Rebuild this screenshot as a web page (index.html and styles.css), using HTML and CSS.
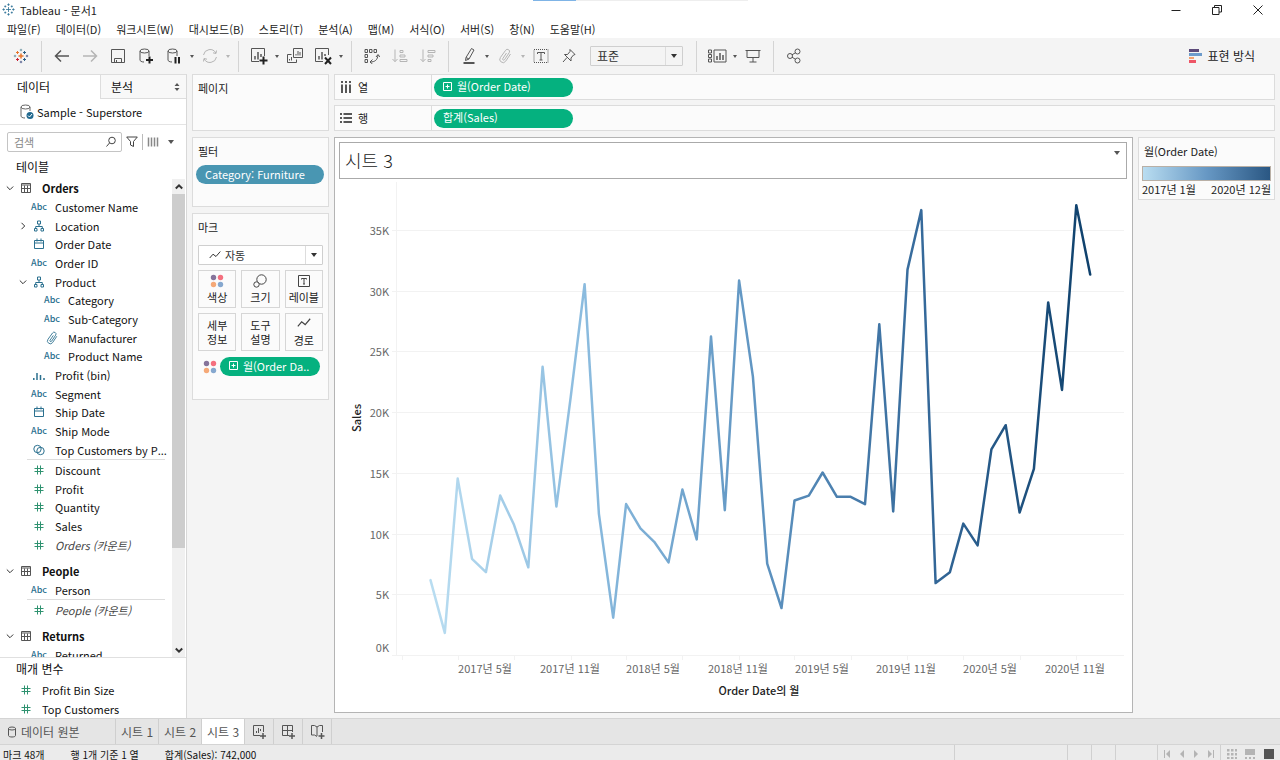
FILE: index.html
```html
<!DOCTYPE html>
<html lang="ko">
<head>
    <meta charset="UTF-8">
    <meta name="viewport" content="width=device-width, initial-scale=1.0">
    <title>Tableau - 문서1</title>
    <link rel="stylesheet" href="styles.css">
</head>
<body>

    <!-- 아이콘 -->
    <svg class="sprite" aria-hidden="true">
        <symbol id="i-logo" viewBox="0 0 16 16"><path d="M8 5v6M5 8h6M8 0.500v3M6.500 2h3M8 12.500v3M6.500 14h3M2 6.500v3M.5 8h3M14 6.500v3M12.500 8h3M4 3v2.500M2.800 4.200h2.500M12 3v2.500M10.800 4.200h2.500M4 10.500v2.500M2.800 11.800h2.500M12 10.500v2.500M10.800 11.800h2.500"/></symbol>
        <symbol id="i-back" viewBox="0 0 16 16"><path d="M15 8H1.500M7 2.500 1.500 8 7 13.500" stroke-width="1.500"/></symbol>
        <symbol id="i-fwd" viewBox="0 0 16 16"><path d="M1 8h13.500M9 2.500 14.500 8 9 13.500" stroke-width="1.500"/></symbol>
        <symbol id="i-save" viewBox="0 0 16 16"><path d="M1.500 1.500h13v13h-13zM4.500 14.500v-4h7v4M6.500 12v2.500"/></symbol>
        <symbol id="i-dbadd" viewBox="0 0 16 16"><ellipse cx="6.500" cy="3" rx="4.500" ry="2"/><path d="M2 3v9c0 1 1.500 2 4 2M11 3v5"/><path d="M11.500 8.500v7M8 12h7" stroke="#222" stroke-width="2"/></symbol>
        <symbol id="i-dbpause" viewBox="0 0 16 16"><ellipse cx="6.500" cy="3" rx="4.500" ry="2"/><path d="M2 3v9c0 1 1.500 2 4 2M11 3v5"/><path d="M9.500 9v6.500M13 9v6.500" stroke="#222" stroke-width="2"/></symbol>
        <symbol id="i-refresh" viewBox="0 0 16 16"><path d="M1.500 7a6.600 6.600 0 0 1 12.300-2M14.500 9a6.600 6.600 0 0 1-12.300 2M14.500 2.500 14 5.500l-3-.7M1.500 13.500l.5-3 3 .7"/></symbol>
        <symbol id="i-newsheet" viewBox="0 0 18 18"><path d="M9 14.500H1.500v-13h13V9"/><path d="M5 9v3.500M8 5v7.500M11 7v3" stroke-width="1.500"/><path d="M13.500 9.500v8M9.500 13.500h8" stroke="#222" stroke-width="2"/></symbol>
        <symbol id="i-dup" viewBox="0 0 16 16"><path d="M6.500 .5h9v9h-9zM4.500 6.500h-4v8h9v-3M9 7.500V6M11 7.500V3M13 7.500V4M2.500 12.500V11M4.500 12.500V9"/></symbol>
        <symbol id="i-clear" viewBox="0 0 18 18"><path d="M9 14.500H1.500v-13h13V8"/><path d="M5 9v3.500M8 5v7.500M11 7v2" stroke-width="1.500"/><path d="m11 10.500 6 6.500M17 10.500 11 17" stroke="#222" stroke-width="2"/></symbol>
        <symbol id="i-swap" viewBox="0 0 16 16"><path d="M1 1.500h2.500v3H1zM5.500 1.500H8v3H5.500zM10 1.500h2.500v3H10zM1 6.500h2.500v3H1zM1 11.500h2.500v3H1zM6 14c5 0 7.500-2 8-7M8.500 11.500 6 14l2.500 2M12 9l2-2.500L16 9"/></symbol>
        <symbol id="i-asc" viewBox="0 0 16 16"><path d="M3 1.500v12M.5 11 3 13.700 5.500 11M8 2.500h3v2H8zM8 7h5v2H8zM8 11.500h7v2H8z"/></symbol>
        <symbol id="i-desc" viewBox="0 0 16 16"><path d="M3 1.500v12M.5 11 3 13.700 5.500 11M8 2.500h7v2H8zM8 7h5v2H8zM8 11.500h3v2H8z"/></symbol>
        <symbol id="i-pen" viewBox="0 0 16 16"><path d="m5 9.500 5.500-9 2.500 1.500-5 9-3.500 1.500zM5 9.500l3 1.500"/><path d="M2.500 15h11" stroke-width="2"/></symbol>
        <symbol id="i-clip" viewBox="0 0 16 16"><path d="m9.500 5-3.700 5.500a1 1 0 0 0 1.700 1.200l4.700-7a2.100 2.100 0 0 0-3.600-2.400L3.400 9.500a3.200 3.200 0 0 0 5.300 3.700L13.500 6"/></symbol>
        <symbol id="i-text" viewBox="0 0 16 16"><path d="M1 1.500h14v13H1z" stroke-dasharray="1 1"/><path d="M4.500 6V4.500h7V6M8 4.500V12M6.500 12h3"/></symbol>
        <symbol id="i-pin" viewBox="0 0 16 16"><path d="m9 1.500 5 5-1.500.5-2.500 3v3L3.500 6.500h3l2.500-3zM6 9.500 2 14"/></symbol>
        <symbol id="i-cards" viewBox="0 0 20 16"><path d="M1.500 2h3v3h-3zM1.500 6.500h3v3h-3zM1.500 11h3v3h-3zM7 2h12v12H7z"/><path d="M10 8v4M13 5v7M16 7v5" stroke-width="1.500"/></symbol>
        <symbol id="i-present" viewBox="0 0 16 16"><path d="M.5 2.500h15M2 2.500v7h12v-7M8 9.500V14M4.500 14h7"/></symbol>
        <symbol id="i-share" viewBox="0 0 16 16"><circle cx="4" cy="8" r="2.500"/><circle cx="11.500" cy="3.500" r="2.500"/><circle cx="11.500" cy="12.500" r="2.500"/><path d="m6 6.800 3.400-2M6 9.200l3.400 2"/></symbol>
        <symbol id="i-table" viewBox="0 0 12 12"><path d="M1.500 1.500h9v9h-9zM1.500 3h9M4.500 3.500V10M7.500 3.500V10M1.500 6.500h9"/></symbol>
        <symbol id="i-hier" viewBox="0 0 12 12"><path d="M4.500 1h3v3h-3zM1.500 8.500h2.500V11H1.500zM8 8.500h2.500V11H8zM6 4v2.500M2.700 8.500v-2h6.600v2"/></symbol>
        <symbol id="i-date" viewBox="0 0 12 12"><path d="M1.500 2.500h9v8h-9zM1.500 5h9M4 .5v3M8 .5v3"/></symbol>
        <symbol id="i-bin" viewBox="0 0 12 12"><path d="M.8 9v2M4 4v7M7.500 6v5M11 9v2" stroke-width="1.500"/></symbol>
        <symbol id="i-set" viewBox="0 0 12 12"><circle cx="4.500" cy="5" r="3.700"/><circle cx="7.500" cy="7" r="3.700"/></symbol>
        <symbol id="i-num" viewBox="0 0 12 12"><path d="M4.500 1.500v9M7.500 1.500v9M1.500 4.500h9M1.500 7.500h9"/></symbol>
        <symbol id="i-down" viewBox="0 0 8 8"><path d="M.8 2.500 4 5.700l3.200-3.200"/></symbol>
        <symbol id="i-right" viewBox="0 0 8 8"><path d="M2.500.8 5.700 4 2.500 7.200"/></symbol>
        <symbol id="i-up" viewBox="0 0 8 8"><path d="M.8 5.500 4 2.300l3.200 3.200"/></symbol>
        <symbol id="i-line" viewBox="0 0 12 10"><path d="M.7 8 4 4.200l3 2.300L11.300 1.500"/></symbol>
        <symbol id="i-plusbox" viewBox="0 0 9 9"><path d="M.5.5h8v8h-8zM4.500 2.500v4M2.500 4.500h4"/></symbol>
        <symbol id="i-dots" viewBox="0 0 14 14"><circle cx="3.500" cy="3.500" r="2.700" fill="#86749b"/><circle cx="10.500" cy="3.500" r="2.700" fill="#f4707f"/><circle cx="3.500" cy="10.500" r="2.700" fill="#f5a978"/><circle cx="10.500" cy="10.500" r="2.700" fill="#86a8cf"/></symbol>
    </svg>

    <header class="titlebar">
        <svg class="icon app-icon"><use href="#i-logo"/></svg>
        <h1>Tableau - 문서1</h1>
        <div class="load-strip"></div>
        <div class="window-buttons">
            <button aria-label="최소화"><svg class="icon" viewBox="0 0 12 12"><path d="M1.500 6.500h9"/></svg></button>
            <button aria-label="이전 크기로"><svg class="icon" viewBox="0 0 12 12"><path d="M1.500 3.500h6.500V10.500H1.500zM3.500 3.500v-2h7v6.500h-2.500"/></svg></button>
            <button aria-label="닫기"><svg class="icon" viewBox="0 0 12 12"><path d="m1.500 1.500 9 9M10.500 1.500l-9 9"/></svg></button>
        </div>
    </header>

    <nav class="menubar">
        <button>파일(F)</button>
        <button>데이터(D)</button>
        <button>워크시트(W)</button>
        <button>대시보드(B)</button>
        <button>스토리(T)</button>
        <button>분석(A)</button>
        <button>맵(M)</button>
        <button>서식(O)</button>
        <button>서버(S)</button>
        <button>창(N)</button>
        <button>도움말(H)</button>
    </nav>

    <div class="toolbar">
        <button class="tool" aria-label="시작 페이지">
            <svg class="icon" viewBox="0 0 16 16">
                <path d="M8 5.500v5M5.500 8h5" stroke="#e8762c" stroke-width="1.500"/>
                <path d="M4.500 3v3M3 4.500h3" stroke="#e8762c"/><path d="M11.500 3v3M10 4.500h3" stroke="#2c5f86"/>
                <path d="M4.500 10v3M3 11.500h3" stroke="#c72035"/><path d="M11.500 10v3M10 11.500h3" stroke="#2c5f86"/>
                <path d="M8 .8v2.400M6.800 2h2.400M2 6.800v2.400M.8 8h2.400" stroke="#7199a6"/>
                <path d="M8 12.800v2.400M6.800 14h2.400M14 6.800v2.400M12.800 8h2.400" stroke="#5b6591"/>
            </svg>
        </button>
        <span class="sep"></span>
        <button class="tool" aria-label="실행 취소"><svg class="icon"><use href="#i-back"/></svg></button>
        <button class="tool off" aria-label="다시 실행"><svg class="icon"><use href="#i-fwd"/></svg></button>
        <button class="tool" aria-label="저장"><svg class="icon"><use href="#i-save"/></svg></button>
        <button class="tool" aria-label="새 데이터 원본"><svg class="icon"><use href="#i-dbadd"/></svg></button>
        <button class="tool" aria-label="자동 업데이트 일시 중지"><svg class="icon"><use href="#i-dbpause"/></svg></button>
        <button class="more" aria-label="업데이트 옵션"></button>
        <button class="tool off" aria-label="업데이트 실행"><svg class="icon"><use href="#i-refresh"/></svg></button>
        <button class="more off" aria-label="실행 옵션"></button>
        <span class="sep"></span>
        <button class="tool" aria-label="새 워크시트"><svg class="icon wide"><use href="#i-newsheet"/></svg></button>
        <button class="more" aria-label="새로 만들기"></button>
        <button class="tool" aria-label="복제"><svg class="icon"><use href="#i-dup"/></svg></button>
        <button class="tool" aria-label="시트 지우기"><svg class="icon wide"><use href="#i-clear"/></svg></button>
        <button class="more" aria-label="지우기 옵션"></button>
        <span class="sep"></span>
        <button class="tool" aria-label="행과 열 바꾸기"><svg class="icon"><use href="#i-swap"/></svg></button>
        <button class="tool off" aria-label="오름차순 정렬"><svg class="icon"><use href="#i-asc"/></svg></button>
        <button class="tool off" aria-label="내림차순 정렬"><svg class="icon"><use href="#i-desc"/></svg></button>
        <span class="sep"></span>
        <button class="tool" aria-label="하이라이트"><svg class="icon"><use href="#i-pen"/></svg></button>
        <button class="more" aria-label="하이라이트 옵션"></button>
        <button class="tool off" aria-label="멤버 그룹화"><svg class="icon"><use href="#i-clip"/></svg></button>
        <button class="more off" aria-label="그룹 옵션"></button>
        <button class="tool" aria-label="마크 레이블 표시"><svg class="icon"><use href="#i-text"/></svg></button>
        <button class="tool" aria-label="축 고정"><svg class="icon"><use href="#i-pin"/></svg></button>
        <span class="select fit">
            <select aria-label="맞춤"><option>표준</option><option>전체 보기</option></select>
        </span>
        <span class="sep"></span>
        <button class="tool" aria-label="카드 표시"><svg class="icon cards-icon"><use href="#i-cards"/></svg></button>
        <button class="more" aria-label="카드 옵션"></button>
        <button class="tool" aria-label="프레젠테이션 모드"><svg class="icon"><use href="#i-present"/></svg></button>
        <span class="sep"></span>
        <button class="tool" aria-label="공유"><svg class="icon"><use href="#i-share"/></svg></button>
        <button class="show-me">
            <svg width="14" height="14" viewBox="0 0 14 14"><path d="M0 0h10v3H0z" fill="#5d4a7a"/><path d="M0 4h13v3H0z" fill="#6d9bcb"/><path d="M0 8h5v2H0z" fill="#f3a170"/><path d="M0 11h7v3H0z" fill="#ee5566"/></svg>
            표현 방식
        </button>
    </div>

    <main class="workspace">
        <aside class="side">
            <div class="side-tabs">
                <button class="active">데이터</button>
                <button>분석
                    <svg width="6" height="8" viewBox="0 0 6 8"><path d="M3 0 5.500 3h-5zM3 8 5.500 5h-5z" fill="#555"/></svg>
                </button>
            </div>
            <div class="source">
                <svg class="icon" viewBox="0 0 16 16"><ellipse cx="6.500" cy="3" rx="4.500" ry="2"/><path d="M2 3v9c0 1 1.500 2 4 2M11 3v4"/><circle cx="11" cy="11.500" r="3.500" fill="#21698f" stroke="none"/><path d="m9 11.500 1.500 1.500L13 10" stroke="#fff"/></svg>
                Sample - Superstore
            </div>
            <div class="search-row">
                <label class="search">
                    <input type="text" placeholder="검색" aria-label="검색">
                    <svg class="icon small" viewBox="0 0 12 12"><circle cx="7" cy="4.500" r="3.300"/><path d="M4.500 7 1.500 10.500"/></svg>
                </label>
                <button aria-label="필터"><svg class="icon small" viewBox="0 0 12 12"><path d="M.7 1h10.600L7.500 5.500v5l-3-1.500V5.500z"/></svg></button>
                <span class="search-sep"></span>
                <button class="view-as" aria-label="보기"><svg class="icon small" viewBox="0 0 12 12"><path d="M1.500 1.500v9M4.500 1.500v9M7.500 1.500v9M10.500 1.500v9" stroke="#888" stroke-width="1.500"/></svg></button>
                <button class="more dark" aria-label="보기 옵션"></button>
            </div>
            <h2>테이블</h2>

            <div class="tree">
                <div class="tree-list">
                    <ul class="rows rows-15">
                        <li class="table-name"><button class="chev" aria-label="접기"><svg class="icon"><use href="#i-down"/></svg></button><span class="kind"><svg class="icon"><use href="#i-table"/></svg></span>Orders</li>
                        <li class="l1"><span class="kind abc">Abc</span>Customer Name</li>
                        <li class="l1"><button class="chev" aria-label="펼치기"><svg class="icon"><use href="#i-right"/></svg></button><span class="kind"><svg class="icon"><use href="#i-hier"/></svg></span>Location</li>
                        <li class="l1"><span class="kind"><svg class="icon"><use href="#i-date"/></svg></span>Order Date</li>
                        <li class="l1"><span class="kind abc">Abc</span>Order ID</li>
                        <li class="l1"><button class="chev" aria-label="접기"><svg class="icon"><use href="#i-down"/></svg></button><span class="kind"><svg class="icon"><use href="#i-hier"/></svg></span>Product</li>
                        <li class="l2"><span class="kind abc">Abc</span>Category</li>
                        <li class="l2"><span class="kind abc">Abc</span>Sub-Category</li>
                        <li class="l2"><span class="kind"><svg class="icon group-icon"><use href="#i-clip"/></svg></span>Manufacturer</li>
                        <li class="l2"><span class="kind abc">Abc</span>Product Name</li>
                        <li class="l1"><span class="kind"><svg class="icon"><use href="#i-bin"/></svg></span>Profit (bin)</li>
                        <li class="l1"><span class="kind abc">Abc</span>Segment</li>
                        <li class="l1"><span class="kind"><svg class="icon"><use href="#i-date"/></svg></span>Ship Date</li>
                        <li class="l1"><span class="kind abc">Abc</span>Ship Mode</li>
                        <li class="l1"><span class="kind"><svg class="icon"><use href="#i-set"/></svg></span>Top Customers by P...</li>
                    </ul>
                    <ul class="rows rows-5 measures">
                        <li class="l1"><span class="kind num"><svg class="icon"><use href="#i-num"/></svg></span>Discount</li>
                        <li class="l1"><span class="kind num"><svg class="icon"><use href="#i-num"/></svg></span>Profit</li>
                        <li class="l1"><span class="kind num"><svg class="icon"><use href="#i-num"/></svg></span>Quantity</li>
                        <li class="l1"><span class="kind num"><svg class="icon"><use href="#i-num"/></svg></span>Sales</li>
                        <li class="l1"><span class="kind num"><svg class="icon"><use href="#i-num"/></svg></span><em>Orders (카운트)</em></li>
                    </ul>
                    <ul class="rows next-table">
                        <li class="table-name"><button class="chev" aria-label="접기"><svg class="icon"><use href="#i-down"/></svg></button><span class="kind"><svg class="icon"><use href="#i-table"/></svg></span>People</li>
                        <li class="l1"><span class="kind abc">Abc</span>Person</li>
                    </ul>
                    <ul class="rows measures">
                        <li class="l1"><span class="kind num"><svg class="icon"><use href="#i-num"/></svg></span><em>People (카운트)</em></li>
                    </ul>
                    <ul class="rows next-table">
                        <li class="table-name"><button class="chev" aria-label="접기"><svg class="icon"><use href="#i-down"/></svg></button><span class="kind"><svg class="icon"><use href="#i-table"/></svg></span>Returns</li>
                        <li class="l1"><span class="kind abc">Abc</span>Returned</li>
                    </ul>
                </div>
                <div class="scrollbar">
                    <button aria-label="위로"><svg class="icon"><use href="#i-up"/></svg></button>
                    <div class="track"><div class="thumb"></div></div>
                    <button aria-label="아래로"><svg class="icon"><use href="#i-down"/></svg></button>
                </div>
            </div>

            <div class="params">
                <h2>매개 변수</h2>
                <ul class="rows">
                    <li><span class="kind num"><svg class="icon"><use href="#i-num"/></svg></span>Profit Bin Size</li>
                    <li><span class="kind num"><svg class="icon"><use href="#i-num"/></svg></span>Top Customers</li>
                </ul>
            </div>
        </aside>

        <section class="cards">
            <div class="card pages"><h3>페이지</h3></div>
            <div class="card filters">
                <h3>필터</h3>
                <button class="pill blue">Category: Furniture</button>
            </div>
            <div class="card marks">
                <h3>마크</h3>
                <span class="select mark-type">
                    <svg class="icon small"><use href="#i-line"/></svg>
                    <select aria-label="마크 유형"><option>자동</option><option>라인</option></select>
                </span>
                <div class="mark-buttons">
                    <button><svg width="14" height="14"><use href="#i-dots"/></svg>색상</button>
                    <button><svg class="icon" viewBox="0 0 14 14"><circle cx="8.500" cy="5.500" r="4.700"/><circle cx="3.500" cy="10.500" r="2.700" fill="#fbfbfb"/></svg>크기</button>
                    <button><svg class="icon" viewBox="0 0 14 14"><path d="M1.500 1.500h11v11h-11zM4.500 5.500v-1h5v1M7 4.500V10M6 10h2"/></svg>레이블</button>
                    <button>세부<br>정보</button>
                    <button>도구<br>설명</button>
                    <button><svg class="icon" viewBox="0 0 12 12"><use href="#i-line" width="12" height="10"/></svg>경로</button>
                </div>
                <div class="mark-row">
                    <svg width="14" height="14"><use href="#i-dots"/></svg>
                    <button class="pill green"><svg class="icon"><use href="#i-plusbox"/></svg>월(Order Da..</button>
                </div>
            </div>
        </section>

        <section class="canvas">
            <div class="shelf">
                <div class="shelf-name"><svg class="icon small" viewBox="0 0 12 12"><path d="M2 0v2M6 0v2M10 0v2M2 3.500V12M6 3.500V12M10 3.500V12" stroke-width="1.500"/></svg>열</div>
                <button class="pill green"><svg class="icon"><use href="#i-plusbox"/></svg>월(Order Date)</button>
            </div>
            <div class="shelf">
                <div class="shelf-name"><svg class="icon small" viewBox="0 0 12 12"><path d="M0 2h2M0 6h2M0 10h2M3.500 2H12M3.500 6H12M3.500 10H12" stroke-width="1.500"/></svg>행</div>
                <button class="pill green">합계(Sales)</button>
            </div>
            <div class="view-row">
                <div class="view">
                    <div class="sheet-title"><h2>시트 3</h2><button class="more dark" aria-label="제목 메뉴"></button></div>
                    <svg id="chart" class="chart" viewBox="0 0 797 533" preserveAspectRatio="xMidYMin meet">
                        <defs>
                            <linearGradient id="months" gradientUnits="userSpaceOnUse" x1="95" y1="0" x2="755" y2="0">
                                <stop offset="0" stop-color="#b9ddf1"/>
                                <stop offset="0.250" stop-color="#88b9dd"/>
                                <stop offset="0.500" stop-color="#5f94c1"/>
                                <stop offset="0.750" stop-color="#35699a"/>
                                <stop offset="1" stop-color="#0f416c"/>
                            </linearGradient>
                        </defs>
                        <g id="grid" class="grid"></g>
                        <g id="labels" class="labels"></g>
                        <text class="axis-title" text-anchor="middle" transform="translate(26 239) rotate(-90)">Sales</text>
                        <text class="axis-title" text-anchor="middle" x="424" y="516">Order Date의 월</text>
                        <path id="line" class="line"/>
                    </svg>
                </div>
                <div class="legend">
                    <h3>월(Order Date)</h3>
                    <div class="ramp"></div>
                    <div class="range"><span>2017년 1월</span><span>2020년 12월</span></div>
                </div>
            </div>
        </section>
    </main>

    <nav class="sheet-tabs">
        <button class="data-tab"><svg class="icon" viewBox="0 0 10 12"><ellipse cx="5" cy="2.500" rx="3.500" ry="1.500"/><path d="M1.500 2.500v7c0 2 7 2 7 0v-7"/></svg>데이터 원본</button>
        <button>시트 1</button>
        <button>시트 2</button>
        <button class="active">시트 3</button>
        <button class="add" aria-label="새 워크시트"><svg class="icon" viewBox="0 0 16 16"><path d="M9 11.500H2.500v-10h10V8M5.500 9V7M7.500 9V4M9.500 7V5"/><path d="M12 9v6M9 12h6" stroke-width="1.500"/></svg></button>
        <button class="add" aria-label="새 대시보드"><svg class="icon" viewBox="0 0 16 16"><path d="M9 11.500H2.500v-10h10V8M7.500 1.500v10M2.500 6.500h10"/><path d="M12 9v6M9 12h6" stroke-width="1.500"/></svg></button>
        <button class="add" aria-label="새 스토리"><svg class="icon" viewBox="0 0 16 16"><path d="M8 12.500 5.500 11H2.500V1.500h3L8 3l2.500-1.500h3V8M8 3v9"/><path d="M12.500 9v6M9.500 12h6" stroke-width="1.500"/></svg></button>
    </nav>

    <footer class="status">
        <span>마크 48개</span>
        <span>행 1개 기준 1 열</span>
        <span>합계(Sales): 742,000</span>
        <div class="status-cells"><i class="cell-l"></i><i class="cell-s"></i><i class="cell-s"></i><i class="cell-m"></i></div>
        <div class="pager">
            <button aria-label="처음"><svg width="6" height="8" viewBox="0 0 6 8"><path d="M0 0h1v8H0zM6 0v8L2 4z"/></svg></button>
            <button aria-label="이전"><svg width="6" height="8" viewBox="0 0 6 8"><path d="M5 0v8L1 4z"/></svg></button>
            <button aria-label="다음"><svg width="6" height="8" viewBox="0 0 6 8"><path d="M1 0v8l4-4z"/></svg></button>
            <button aria-label="마지막"><svg width="6" height="8" viewBox="0 0 6 8"><path d="M5 0h1v8H5zM0 0v8l4-4z"/></svg></button>
        </div>
        <div class="pager modes">
            <button aria-label="시트 정렬"><svg width="10" height="10" viewBox="0 0 10 10"><path d="M0 0h2.500v2.500H0zM4 0h2.500v2.500H4zM8 0h2v2.500H8zM0 4h2.500v2.500H0zM4 4h2.500v2.500H4zM8 4h2v2.500H8zM0 8h2.500v2H0zM4 8h2.500v2H4zM8 8h2v2H8z"/></svg></button>
            <button aria-label="필름 스트립"><svg width="10" height="10" viewBox="0 0 10 10"><path d="M0 0h10v6H0zM0 8h2v2H0zM4 8h2v2H4zM8 8h2v2H8z"/></svg></button>
            <button class="active" aria-label="탭"><svg width="10" height="10" viewBox="0 0 10 10"><path d="M0 0h10v10H0z"/></svg></button>
        </div>
    </footer>

    <script>
        // 월별 매출 (천 단위), 2017년 1월부터
        const sales = [
            6.25, 1.9, 14.6, 8, 6.9, 13.2, 10.8, 7.3, 23.8, 12.3, 21.3, 30.6,
            11.7, 3.15, 12.5, 10.5, 9.4, 7.7, 13.7, 9.6, 26.3, 12, 30.9, 23,
            7.6, 3.95, 12.8, 13.2, 15.1, 13.1, 13.1, 12.5, 27.3, 11.9, 31.8, 36.7,
            6, 6.9, 10.9, 9.1, 17, 19, 11.8, 15.4, 29.1, 21.9, 37.1, 31.4
        ];
        const left = 61, right = 789, top_ = 3, bottom = 477;
        const svgNS = "http://www.w3.org/2000/svg";

        function xOf(month) {
            const days = (Date.UTC(2017, month, 1) - Date.UTC(2017, 0, 1)) / 86400000;
            return 95.5 + days * 0.4613;
        }
        function yOf(value) {
            return bottom - value * 12.15;
        }
        function add(parent, name, attrs, text) {
            const el = document.createElementNS(svgNS, name);
            for (const key in attrs) el.setAttribute(key, attrs[key]);
            if (text) el.textContent = text;
            document.getElementById(parent).appendChild(el);
        }

        for (let v = 0; v <= 35; v += 5) {
            const y = Math.round(yOf(v)) - 0.5;
            add("grid", "path", { d: `M${left - 4} ${y}H${right}` });
            add("labels", "text", { x: left - 7, y: v === 0 ? y - 4 : y + 4, "text-anchor": "end" }, v + "K");
        }
        add("grid", "path", { d: `M${left + 0.5} ${top_}V${bottom}` });
        for (let m = -2; m < 48; m += 4) {
            add("grid", "path", { d: `M${Math.round(xOf(m)) + 0.5} ${bottom}v4` });
        }
        for (let m = 4; m < 48; m += 6) {
            const label = `${2017 + Math.floor(m / 12)}년 ${m % 12 + 1}월`;
            add("labels", "text", { x: Math.round(xOf(m)) - 1, y: 494, "text-anchor": "middle" }, label);
        }
        document.getElementById("line").setAttribute("d",
            "M" + sales.map((v, i) => xOf(i).toFixed(1) + " " + yOf(v).toFixed(1)).join("L"));
    </script>

</body>
</html>
```
FILE: styles.css
```css
* {
    box-sizing: border-box;
}
body {
    font-family: "Noto Sans CJK KR", "Noto Sans", sans-serif;
    font-size: 12px;
    line-height: 18px;
    color: #222;
    background-color: #f4f4f4;
    margin: 0;
    height: 100vh;
    display: flex;
    flex-direction: column;
    overflow: hidden;
}
h1, h2, h3, ul {
    margin: 0;
    padding: 0;
    font-weight: normal;
}
ul {
    list-style: none;
}
button, select, input {
    font: inherit;
    color: inherit;
    background: none;
    border: none;
    padding: 0;
    margin: 0;
}
button {
    display: flex;
    align-items: center;
    justify-content: center;
    white-space: nowrap;
}
svg {
    flex: none;
    display: block;
}
.sprite {
    position: absolute;
    width: 0;
    height: 0;
}
.icon {
    width: 16px;
    height: 16px;
    fill: none;
    stroke: currentColor;
    stroke-width: 1;
}
.icon.wide {
    width: 18px;
    height: 18px;
}
.icon.small {
    width: 12px;
    height: 12px;
}

/* title and menu */
.titlebar {
    position: relative;
    display: flex;
    align-items: center;
    height: 19px;
    padding-left: 2px;
    background: #fff;
}
.titlebar h1 {
    font-size: 11px;
    margin-left: 5px;
}
.app-icon {
    width: 13px;
    height: 13px;
    color: #2d7196;
}
.load-strip {
    position: absolute;
    top: 0;
    left: 533px;
    width: 215px;
    height: 1px;
    background: linear-gradient(to right, #7fb4e6 43px, #eee 43px);
}
.window-buttons {
    display: flex;
    margin-left: auto;
    padding-right: 2px;
}
.window-buttons button {
    width: 41px;
}
.window-buttons .icon {
    width: 12px;
    height: 12px;
}
.menubar {
    display: flex;
    gap: 15px;
    height: 19px;
    padding: 0 7px;
    background: #fff;
    font-size: 11px;
}

/* toolbar */
.toolbar {
    display: flex;
    align-items: center;
    height: 36px;
    padding-left: 7px;
    color: #555;
}
.tool {
    width: 28px;
    height: 28px;
}
.off {
    color: #b5b5b5;
}
.icon.cards-icon {
    width: 20px;
}
.more {
    width: 8px;
    height: 20px;
    color: #555;
}
.more.off {
    color: #b5b5b5;
}
.more::after, .select::after {
    content: "";
    border: 2px solid transparent;
    border-top: 3px solid currentColor;
    border-bottom: 0;
}
.more.dark::after, .select::after {
    border-width: 4px 3px 0;
}
.sep {
    width: 1px;
    height: 31px;
    margin: 0 6px;
    background: #d4d4d4;
}
.select {
    position: relative;
    display: flex;
    align-items: center;
    height: 20px;
    border: 1px solid #cfcfcf;
    border-radius: 1px;
    color: #333;
}
.select select {
    flex: 1;
    appearance: none;
    height: 18px;
    line-height: 18px;
    border-right: 1px solid #ddd;
    margin-right: 16px;
}
.select::after {
    position: absolute;
    right: 5px;
}
.fit {
    width: 93px;
    margin: 0 7px;
}
.fit select {
    padding-left: 6px;
}
.show-me {
    gap: 4px;
    margin-left: auto;
    padding-right: 25px;
    color: #222;
}

/* workspace */
.workspace {
    flex: 1;
    min-height: 0;
    display: flex;
    gap: 5px;
    padding-right: 5px;
}
.side {
    display: flex;
    flex-direction: column;
    width: 187px;
    min-height: 0;
    background: #fff;
    border-top: 1px solid #ddd;
    border-right: 1px solid #d8d8d8;
    font-size: 11px;
    color: #111;
}
.side-tabs {
    display: flex;
    height: 24px;
    font-size: 12px;
}
.side-tabs button {
    flex: 1;
    position: relative;
    justify-content: flex-start;
    padding-left: 10px;
    background: #f8f8f8;
    border-left: 1px solid #ddd;
    border-bottom: 1px solid #ddd;
}
.side-tabs svg {
    position: absolute;
    right: 6px;
}
.side-tabs .active {
    flex: none;
    width: 100px;
    padding-left: 17px;
    background: #fff;
    border: none;
}
.source {
    display: flex;
    align-items: center;
    gap: 2px;
    height: 26px;
    padding-left: 19px;
    border-bottom: 1px solid #e4e4e4;
}
.source .icon {
    color: #666;
}
.search-row {
    display: flex;
    align-items: center;
    gap: 4px;
    padding: 7px 8px 0 7px;
    color: #444;
}
.search {
    display: flex;
    align-items: center;
    width: 115px;
    height: 20px;
    padding: 0 4px 0 6px;
    border: 1px solid #c4c4c4;
    border-radius: 2px;
}
.search input {
    flex: 1;
    min-width: 0;
}
.search input::placeholder {
    color: #888;
}
.search-sep {
    width: 1px;
    height: 16px;
    background: #bbb;
}
.view-as {
    margin-right: 4px;
}
.side h2 {
    font-size: 12px;
    line-height: 20px;
    padding: 5px 0 2px 16px;
}
.tree {
    flex: 1;
    display: flex;
    min-height: 0;
}
.tree-list {
    flex: 1;
    min-width: 0;
    overflow: hidden;
}
.rows {
    display: grid;
    grid-auto-rows: 1fr;
}
.rows-15 {
    height: 280px;
}
.rows-5 {
    height: 95px;
}
.rows li {
    display: flex;
    align-items: center;
    min-height: 18px;
    padding-left: 17px;
    line-height: 18px;
    white-space: nowrap;
}
.next-table li, .params li {
    min-height: 19px;
}
.rows .l1 {
    padding-left: 30px;
}
.rows .l2 {
    padding-left: 43px;
}
.rows .table-name {
    font-weight: bold;
}
.rows em {
    color: #444;
}
.chev {
    width: 14px;
    height: 18px;
    margin-left: -14px;
    color: #333;
}
.chev .icon {
    width: 8px;
    height: 8px;
}
.kind {
    display: flex;
    justify-content: center;
    width: 18px;
    margin-right: 7px;
    color: #2b708f;
}
.kind .icon {
    width: 12px;
    height: 12px;
}
.kind .group-icon {
    width: 14px;
    height: 14px;
}
.table-name .kind {
    color: #555;
}
.kind.num {
    color: #2f9270;
}
.abc {
    font-size: 9px;
    font-weight: 500;
}
.measures::before {
    content: "";
    height: 1px;
    margin: 0 7px 0 27px;
    background: #ddd;
}
.measures {
    grid-template-rows: 2px;
}
.next-table {
    margin-top: 7px;
}
.scrollbar {
    display: flex;
    flex-direction: column;
    width: 13px;
    margin-right: 1px;
    background: #f0f0f0;
}
.scrollbar button {
    height: 15px;
    color: #333;
}
.scrollbar .icon {
    width: 8px;
    height: 8px;
    stroke-width: 2;
}
.track {
    flex: 1;
}
.thumb {
    height: 79%;
    background: #cdcdcd;
}
.params {
    border-top: 1px solid #e0e0e0;
    height: 61px;
}
.params h2 {
    padding: 1px 0 1px 16px;
}

/* pages, filters, marks */
.cards {
    display: flex;
    flex-direction: column;
    gap: 6px;
    width: 137px;
}
.card {
    padding: 4px 4px;
    background: #fbfbfb;
    border: 1px solid #dcdcdc;
}
.card h3 {
    font-size: 11px;
    padding-left: 1px;
}
.pages {
    height: 57px;
}
.filters {
    height: 70px;
}
.marks {
    height: 187px;
}
.pill {
    justify-content: flex-start;
    gap: 5px;
    height: 19px;
    padding: 0 9px 2px;
    border-radius: 10px;
    font-size: 11px;
    color: #fff;
}
.pill .icon {
    width: 9px;
    height: 9px;
}
.blue {
    width: 128px;
    margin-top: 5px;
    margin-left: -1px;
    background: #4996b2;
}
.green {
    background: #05b17f;
}
.mark-type {
    margin: 9px 1px 5px;
    padding-left: 10px;
    gap: 4px;
    font-size: 11px;
    background: #fff;
}
.mark-buttons {
    display: grid;
    grid-template-columns: repeat(3, 1fr);
    gap: 5px;
    margin: 0 1px;
}
.mark-buttons button {
    flex-direction: column;
    gap: 2px;
    height: 38px;
    border: 1px solid #d6d6d6;
    font-size: 11px;
    line-height: 14px;
}
.mark-buttons .icon {
    width: 14px;
    height: 14px;
    color: #444;
}
.mark-row {
    display: flex;
    align-items: center;
    gap: 3px;
    margin-top: 6px;
    padding-left: 6px;
}
.mark-row .pill {
    flex: 1;
    margin-right: 4px;
}

/* shelves and view */
.canvas {
    flex: 1;
    min-width: 0;
    display: flex;
    flex-direction: column;
    gap: 5px;
}
.shelf {
    display: flex;
    align-items: center;
    gap: 2px;
    height: 26px;
    background: #fbfbfb;
    border: 1px solid #dcdcdc;
}
.shelf-name {
    display: flex;
    align-items: center;
    gap: 6px;
    width: 97px;
    height: 24px;
    padding-left: 5px;
    border-right: 1px solid #dcdcdc;
    font-size: 11px;
}
.shelf .pill {
    width: 139px;
}
.view-row {
    flex: 1;
    min-height: 0;
    display: flex;
    align-items: flex-start;
    gap: 5px;
    padding: 1px 0 5px;
}
.view {
    flex: 1;
    min-width: 0;
    align-self: stretch;
    display: flex;
    flex-direction: column;
    background: #fff;
    border: 1px solid #b4b4b4;
}
.sheet-title {
    display: flex;
    justify-content: space-between;
    height: 37px;
    margin: 4px 5px 0 4px;
    padding: 0 5px;
    border: 1px solid #aaa;
}
.sheet-title h2 {
    font-size: 18px;
    font-weight: 300;
    line-height: 34px;
}
.chart {
    flex: 1;
    width: 100%;
    min-height: 0;
}
.grid path {
    stroke: #f2f2f2;
    fill: none;
}
.labels text {
    font-size: 11px;
    fill: #666;
}
.axis-title {
    font-size: 11px;
    font-weight: 500;
    fill: #222;
}
.line {
    fill: none;
    stroke: url(#months);
    stroke-width: 2.5px;
    stroke-linejoin: round;
    stroke-linecap: round;
}
.legend {
    width: 137px;
    height: 63px;
    padding: 4px 3px;
    background: #fbfbfb;
    border: 1px solid #dcdcdc;
    font-size: 11px;
}
.legend h3 {
    font-size: 11px;
    padding-left: 2px;
}
.ramp {
    height: 15px;
    margin-top: 6px;
    border: 1px solid #b9b0a6;
    background: linear-gradient(to right, #b9ddf1, #6798c4 50%, #2a5783);
}
.range {
    display: flex;
    justify-content: space-between;
    line-height: 16px;
    white-space: nowrap;
}

/* bottom bars */
.sheet-tabs {
    display: flex;
    height: 27px;
    background: #e5e5e5;
    border-top: 1px solid #d4d4d4;
    border-bottom: 1px solid #d4d4d4;
    color: #555;
}
.sheet-tabs button {
    width: 43px;
    border-right: 1px solid #cfcfcf;
    font-size: 12px;
}
.sheet-tabs .data-tab {
    width: 116px;
    justify-content: flex-start;
    gap: 4px;
    padding-left: 7px;
}
.data-tab .icon {
    width: 10px;
    height: 12px;
}
.sheet-tabs .active {
    background: #fff;
}
.sheet-tabs .add {
    width: 29px;
}
.status {
    display: flex;
    gap: 26px;
    height: 15px;
    padding-left: 3px;
    background: #ebebeb;
    font-size: 10px;
    line-height: 20px;
    color: #111;
    white-space: nowrap;
}
.status-cells {
    display: flex;
    margin-left: auto;
    margin-right: -26px;
}
.status-cells i {
    border-left: 1px solid #d0d0d0;
}
.cell-l {
    width: 113px;
}
.cell-s {
    width: 24px;
}
.cell-m {
    width: 42px;
}
.pager {
    display: flex;
    justify-content: space-around;
    width: 63px;
    padding: 3px 2px 0;
    border-left: 1px solid #d0d0d0;
    margin-right: -26px;
}
.pager svg {
    fill: #b4b4b4;
}
.modes {
    width: 60px;
    margin-right: 0;
}
.modes .active svg {
    fill: #555;
}
```
